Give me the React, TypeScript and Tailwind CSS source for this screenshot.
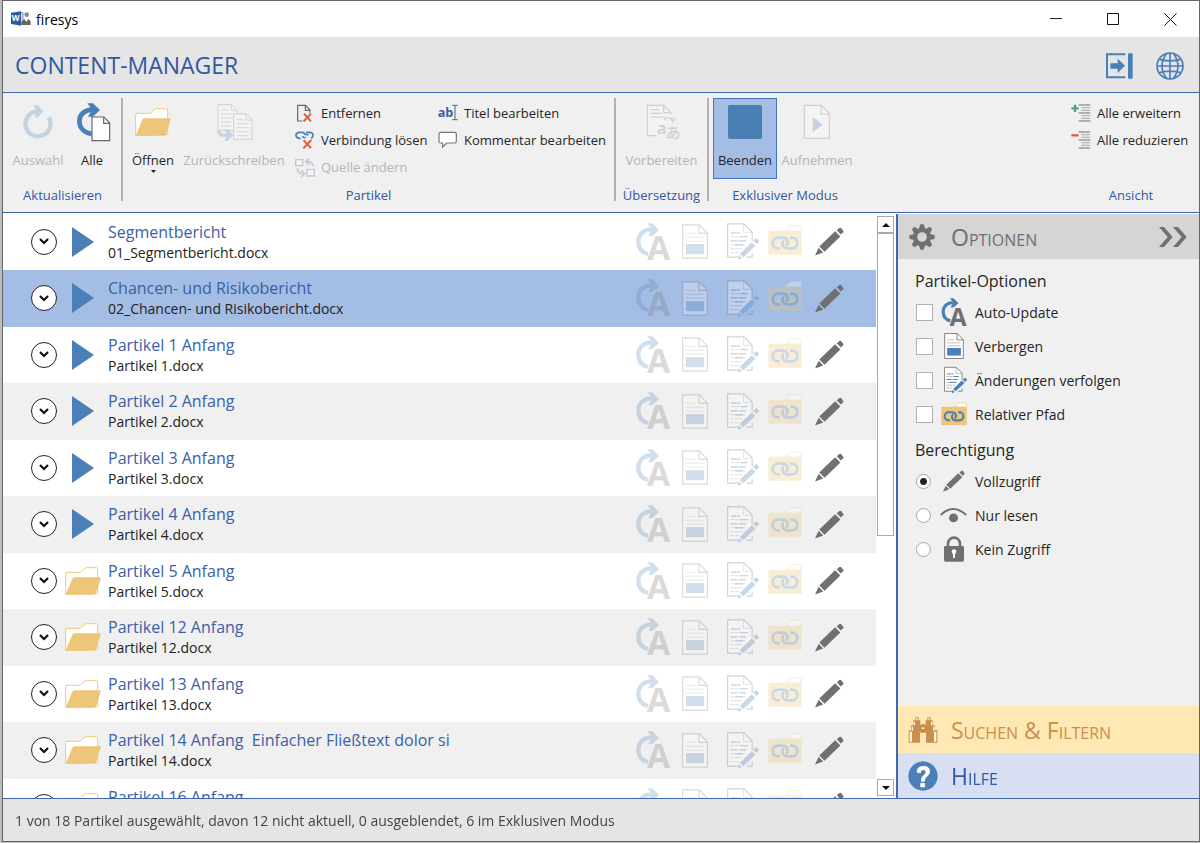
import { useState, type ReactNode } from "react";

type IconProps = { className?: string };

const BLUE = "#4a7fb8";
const GREY = "#707070";

function RefreshIcon({ className }: IconProps) {
  return (
    <svg className={className} width="30" height="34" viewBox="0 0 90 102" aria-hidden="true">
      <path d="M77 37A37.500 37.500 0 1 1 42 19" fill="none" stroke={BLUE} strokeWidth="13" />
      <path d="M30 1h15l16 18-16 18H33l6-12V13z" fill={BLUE} />
    </svg>
  );
}

function RefreshAllIcon({ className }: IconProps) {
  return (
    <svg className={className} width="34" height="39" viewBox="0 0 102 117" aria-hidden="true">
      <path d="M44 93C20 90 7 73 7 55C7 34 24 20 46 20" fill="none" stroke={BLUE} strokeWidth="14" />
      <path d="M31 1h17l21 20-21 20H33l8-14V14z" fill={BLUE} />
      <path d="M45 42h36l17 18v53H45z" fill="#fff" stroke="#666" strokeWidth="3.500" />
      <path d="M80 43v18h17" fill="none" stroke="#666" strokeWidth="3.500" />
    </svg>
  );
}

function FolderOpenIcon({ className }: IconProps) {
  return (
    <svg className={className} width="36" height="28" viewBox="0 0 108 84" aria-hidden="true">
      <path d="M2 82V20q0-4 4-4h40l14-13q2-1 4-1h30q4 0 4 4v74z" fill="#fff" stroke="#f3c778" strokeWidth="3" />
      <path d="M29 31h75q4 0 3 4L93 79q-2 4-6 4H2L22 35q2-4 7-4z" fill="#eec679" />
    </svg>
  );
}

function WriteBackIcon({ className }: IconProps) {
  return (
    <svg className={className} width="37" height="37" viewBox="0 0 111 111" aria-hidden="true">
      <path d="M6 2h41l16 17v60H6z" fill="#fff" stroke={GREY} strokeWidth="3" />
      <path d="M46 3v17h16M15 18h20M15 30h36M15 42h36M15 54h30M15 66h30" fill="none" stroke={GREY} strokeWidth="2.500" />
      <path d="M53 30h38l17 17v59H53z" fill="#fff" stroke={GREY} strokeWidth="3" />
      <path d="M90 31v17h17" fill="none" stroke={GREY} strokeWidth="3" />
      <path d="M62 47h20M62 59h36M62 71h36M62 83h36M62 95h36" stroke={BLUE} strokeWidth="2.500" />
      <path d="M6 80q4 15 26 15" fill="none" stroke={BLUE} strokeWidth="10" />
      <path d="M25 76h10l17 18-17 16H25l6-10V86z" fill={BLUE} />
    </svg>
  );
}

function Cross() {
  return <path d="M27 29l21 23M48 29L26 52" stroke="#dd5d41" strokeWidth="6" />;
}

function RemoveIcon() {
  return (
    <svg width="20" height="20" viewBox="0 0 60 60" aria-hidden="true">
      <path d="M22 51H8V4h24l13 14v8M31 5v14h13" fill="none" stroke="#666" strokeWidth="3.500" />
      <Cross />
    </svg>
  );
}

function UnlinkIcon() {
  return (
    <svg width="20" height="20" viewBox="0 0 60 60" aria-hidden="true">
      <path
        d="M17 22h-4q-10-1-10-9T12 4h9q8 0 9 8M22 16q4 5 10 4M33 4h10q11 0 11 9 0 7-6 9M40 12q-4-3-9-1"
        fill="none"
        stroke={BLUE}
        strokeWidth="5"
      />
      <path d="M26 28l22 23M49 27L25 52" stroke="#dd5d41" strokeWidth="6" />
    </svg>
  );
}

function SourceIcon() {
  return (
    <svg width="20" height="20" viewBox="0 0 60 60" aria-hidden="true">
      <path d="M2 5h21v18H2zM36 34h22v20H36z" fill="#fff" stroke={GREY} strokeWidth="4" />
      <path d="M54 25Q54 11 36 11M7 31q0 16 15 16" fill="none" stroke={BLUE} strokeWidth="5" />
      <path d="M43 1L32 11l11 10M18 37l11 10-11 10" fill="none" stroke={BLUE} strokeWidth="5" />
    </svg>
  );
}

function RenameIcon() {
  return (
    <svg width="20" height="20" viewBox="0 0 60 60" aria-hidden="true">
      <text x="-1" y="40" fontFamily="Open Sans, Noto Sans, sans-serif" fontSize="38" fontWeight="700" fill="#3660a6">
        ab
      </text>
      <path d="M43 4h6l2 2 2-2h6M43 47h6l2-2 2 2h6M51 6v39" fill="none" stroke="#777" strokeWidth="3.500" />
    </svg>
  );
}

function CommentIcon() {
  return (
    <svg width="20" height="20" viewBox="0 0 60 60" aria-hidden="true">
      <path
        d="M8 4h42q5 0 5 5v22q0 5-5 5H26L14 48V36H8q-5 0-5-5V9q0-5 5-5z"
        fill="#fff"
        stroke="#777"
        strokeWidth="3.500"
      />
    </svg>
  );
}

function TranslateIcon({ className }: IconProps) {
  return (
    <svg className={className} width="36" height="36" viewBox="0 0 108 108" aria-hidden="true">
      <path d="M30 95H4V4h50l20 22v7" fill="#fff" stroke={GREY} strokeWidth="3.500" />
      <path d="M53 5v21h20M14 17h24M14 28h32M14 39h46" fill="none" stroke={GREY} strokeWidth="3.500" />
      <text x="32" y="91" fontFamily="Open Sans, Noto Sans, sans-serif" fontSize="50" fontWeight="600" fill={GREY}>
        a
      </text>
      <text x="59" y="101" fontFamily="Noto Sans CJK JP, sans-serif" fontSize="45" fontWeight="500" fill={GREY}>
        あ
      </text>
      <path d="M54 49q4-9 15-8 9 1 12 11" fill="none" stroke={BLUE} strokeWidth="4" />
      <path d="M73 44l9 9 3-12" fill="none" stroke={BLUE} strokeWidth="4" />
    </svg>
  );
}

function RecordIcon({ className }: IconProps) {
  return (
    <svg className={className} width="28" height="36" viewBox="0 0 84 108" aria-hidden="true">
      <path d="M4 4h51l24 25v74H4z" fill="#fff" stroke={GREY} strokeWidth="3.500" />
      <path d="M54 5v25h24" fill="none" stroke={GREY} strokeWidth="3.500" />
      <path d="M29 38l30 24-30 23z" fill={BLUE} />
    </svg>
  );
}

function OutlineIcon({ kind }: { kind: "plus" | "minus" }) {
  return (
    <svg width="20" height="20" viewBox="0 0 60 60" aria-hidden="true">
      <path d="M23 3h35M23 27h35M23 51h35" stroke="#6f6f6f" strokeWidth="3.500" />
      <path d="M31 11h27M31 19h27M31 35h27M31 43h27" stroke="#b5b5b5" strokeWidth="3.500" />
      {kind === "plus" ? (
        <path d="M1 13h22M12 2v22" stroke="#4f9f81" strokeWidth="7" />
      ) : (
        <path d="M1 13h22" stroke="#dd5d41" strokeWidth="7" />
      )}
    </svg>
  );
}

function AutoUpdateIcon({ className }: IconProps) {
  return (
    <svg className={className} viewBox="0 0 102 114" aria-hidden="true">
      <path d="M36 93C17 88 7 74 7 56C7 34 24 19 45 19" fill="none" stroke={BLUE} strokeWidth="13" />
      <path d="M34 1h15l20 20-20 18H37l7-13V13z" fill={BLUE} />
      <text x="33" y="112" fontFamily="Open Sans, Noto Sans, sans-serif" fontSize="101" fontWeight="700" fill={GREY}>
        A
      </text>
    </svg>
  );
}

function HideIcon({ className }: IconProps) {
  return (
    <svg className={className} viewBox="0 0 80 106" aria-hidden="true">
      <path d="M2 2h51l25 25v77H2z" fill="#fff" stroke={GREY} strokeWidth="3.500" />
      <path d="M52 3v25h25" fill="none" stroke={GREY} strokeWidth="3.500" />
      <path d="M12 28h28M12 40h56M12 52h56" stroke="#aaa" strokeWidth="3" />
      <path d="M12 61h56v31H12z" fill={BLUE} />
    </svg>
  );
}

function TrackIcon({ className }: IconProps) {
  return (
    <svg className={className} viewBox="0 0 98 112" aria-hidden="true">
      <path d="M36 104H2V2h50l25 25v30L36 96z" fill="#fff" />
      <path d="M36 104H2V2h50l25 25v28M77 92v12H60" fill="none" stroke={GREY} strokeWidth="3.500" />
      <path d="M51 3v25h25M10 41h57M10 54h48M10 66h46M10 78h36M10 90h26" fill="none" stroke="#999" strokeWidth="3" strokeDasharray="12 2" />
      <path d="M12 30h18M32 30h8M42 41h20M12 54h18M38 54h20M24 66h26" stroke={BLUE} strokeWidth="4" />
      <path d="M80 54l8-7q2-2 4 0l5 6q2 2 0 4l-7 7zM76 58l11 11-37 35-11-10zM36 98l10 9-12 5z" fill={BLUE} />
    </svg>
  );
}

function PathFolderIcon({ className }: IconProps) {
  return (
    <svg className={className} viewBox="0 0 102 90" aria-hidden="true">
      <path d="M54 18L64 4q2-2 5-2h28q3 0 3 4v13z" fill="#fff" stroke="#f0cb84" strokeWidth="3" />
      <path d="M1 20q0-3 4-3h93q3 0 3 3v66q0 3-3 3H5q-4 0-4-3z" fill="#eec679" />
      <path
        d="M35 70H30a16 16 0 0 1 0-32h14Q58 39 59 52q0 6-5 10M67 38h5a16 16 0 0 1 0 32H58Q44 69 43 56q0-6 5-10"
        fill="none"
        stroke={BLUE}
        strokeWidth="8"
      />
    </svg>
  );
}

function PencilIcon({ className }: IconProps) {
  return (
    <svg className={className} viewBox="0 0 88 86" aria-hidden="true">
      <path d="M66 9l8-7q3-2 6 1l6 8q2 3-1 5l-7 6zM61 12l16 16-48 46-16-16zM11 62l14 14-23 9q-2 0-1-2z" fill={GREY} />
    </svg>
  );
}

function EyeIcon({ className }: IconProps) {
  return (
    <svg className={className} viewBox="0 0 84 50" aria-hidden="true">
      <path d="M2 25Q40-12 82 25" fill="none" stroke={GREY} strokeWidth="6" />
      <circle cx="42" cy="34" r="14" fill={GREY} />
    </svg>
  );
}

function LockIcon({ className }: IconProps) {
  return (
    <svg className={className} viewBox="0 0 60 78" aria-hidden="true">
      <path d="M12 34V23a18 18 0 0 1 36 0v11" fill="none" stroke={GREY} strokeWidth="8" />
      <path d="M4 30h52q4 0 4 4v38q0 5-5 5H5q-5 0-5-5V34q0-4 4-4z" fill={GREY} />
      <circle cx="30" cy="47" r="7" fill="#fff" />
      <path d="M27 48h6v18h-6z" fill="#fff" />
    </svg>
  );
}

function GearIcon() {
  return (
    <svg width="26" height="26" viewBox="-39 -39 78 78" aria-hidden="true">
      {[0, 45, 90, 135, 180, 225, 270, 315].map((angle) => (
        <path key={angle} d="M-9-25L-5-38H5L9-25z" fill={GREY} transform={`rotate(${angle})`} />
      ))}
      <circle r="21" fill="none" stroke={GREY} strokeWidth="13" />
    </svg>
  );
}

function BinocularsIcon() {
  return (
    <svg width="30" height="28" viewBox="0 0 90 84" aria-hidden="true">
      <path d="M22 4h10v9h5v14h3v-3h10v3h3V13h5V4h10v9h6v15h6v15h8v37H54V50H36v30H2V43h7V28h7V13h6z" fill="#c8904e" />
      <path d="M25 6h4v7h-4zM61 6h4v7h-4zM17 17h4v11h-4zM69 17h4v11h-4zM11 32h4v12h-4zM75 32h4v12h-4zM5 47h7v30H5zM78 47h7v30h-7z" fill="#fff4dc" />
      <path d="M41 34h8v5h-8z" fill="#ffe8b4" />
    </svg>
  );
}

function HelpIcon() {
  return (
    <svg width="30" height="30" viewBox="0 0 90 90" aria-hidden="true">
      <circle cx="45" cy="45" r="44" fill={BLUE} />
      <path d="M27 34q0-18 19-18t19 16q0 8-8 14-8 5-8 15h-9q0-13 8-19 6-4 6-9 0-7-8-7-9 0-9 10zM38 67h12v11H38z" fill="#fff" stroke="#fff" strokeWidth="2" />
    </svg>
  );
}

function DockIcon() {
  return (
    <svg width="28" height="28" viewBox="0 0 84 84" aria-hidden="true">
      <path d="M61 7H6v69h55" fill="none" stroke={BLUE} strokeWidth="6" />
      <rect x="69" y="4" width="14" height="76" rx="3" fill={BLUE} />
      <path d="M16 34h22V20l22 21-22 22V50H16z" fill={BLUE} />
    </svg>
  );
}

function GlobeIcon() {
  return (
    <svg width="28" height="28" viewBox="0 0 84 84" fill="none" stroke={BLUE} strokeWidth="5" aria-hidden="true">
      <circle cx="42" cy="42" r="39" />
      <path d="M42 3v78M3 42h78M10 22q32 9 64 0M10 62q32-9 64 0M32 4q-28 38 0 76M52 4q28 38 0 76" />
    </svg>
  );
}

function AppIcon() {
  return (
    <svg width="20" height="16" viewBox="0 0 60 48" aria-hidden="true">
      <path d="M24 5h12v34H24z" fill="#d9e2f0" stroke="#3560a8" strokeWidth="2" />
      <path d="M0 5l30-4v43L0 39z" fill="#2f5ba5" />
      <text x="2" y="31" fontFamily="Open Sans, Noto Sans, sans-serif" fontSize="24" fontWeight="700" fill="#fff">
        W
      </text>
      <circle cx="47" cy="11" r="7" fill="#8a8a8a" />
      <path d="M31 42V32l9-8 6 8 6-8 7 7v11z" fill="#666" />
    </svg>
  );
}

function BigButton({
  label,
  icon,
  width,
  disabled,
  active,
  arrow,
}: {
  label: string;
  icon: ReactNode;
  width: string;
  disabled?: boolean;
  active?: boolean;
  arrow?: boolean;
}) {
  return (
    <button
      type="button"
      disabled={disabled}
      aria-pressed={active}
      className={`flex h-full shrink-0 flex-col items-center border ${width} ${
        active ? "border-[#4472c4] bg-[#a4bde4]" : "border-transparent"
      } ${disabled ? "text-[#b4b4b4]" : "text-[#262626]"}`}
    >
      <span className={`flex h-[46px] w-full items-center justify-center ${disabled ? "opacity-25" : ""}`}>{icon}</span>
      <span className="mt-[5px] leading-5 whitespace-nowrap">{label}</span>
      {arrow && (
        <svg width="5" height="3" viewBox="0 0 5 3" aria-hidden="true">
          <path d="M0 0h5L2.500 3z" fill="#222" />
        </svg>
      )}
    </button>
  );
}

function SmallButton({ label, icon, disabled }: { label: string; icon: ReactNode; disabled?: boolean }) {
  return (
    <button
      type="button"
      disabled={disabled}
      className={`flex h-[27px] items-center gap-1.5 whitespace-nowrap ${disabled ? "text-[#b4b4b4]" : "text-[#262626]"}`}
    >
      <span className={disabled ? "opacity-30" : ""}>{icon}</span>
      <span>{label}</span>
    </button>
  );
}

function RibbonGroup({ title, className, children }: { title: string; className: string; children: ReactNode }) {
  return (
    <section aria-label={title} className={`flex shrink-0 flex-col ${className}`}>
      <div className="flex h-[81px]">{children}</div>
      <div className="flex h-[33px] items-center justify-center text-[#3358a0]">{title}</div>
    </section>
  );
}

function Divider() {
  return <div className="-mx-px h-[103px] w-0.5 shrink-0 bg-[#b0b0b0]" />;
}

type Particle = { title: string; file: string; exclusive: boolean };

const particles: Particle[] = [
  { title: "Segmentbericht", file: "01_Segmentbericht.docx", exclusive: true },
  { title: "Chancen- und Risikobericht", file: "02_Chancen- und Risikobericht.docx", exclusive: true },
  { title: "Partikel 1 Anfang", file: "Partikel 1.docx", exclusive: true },
  { title: "Partikel 2 Anfang", file: "Partikel 2.docx", exclusive: true },
  { title: "Partikel 3 Anfang", file: "Partikel 3.docx", exclusive: true },
  { title: "Partikel 4 Anfang", file: "Partikel 4.docx", exclusive: true },
  { title: "Partikel 5 Anfang", file: "Partikel 5.docx", exclusive: false },
  { title: "Partikel 12 Anfang", file: "Partikel 12.docx", exclusive: false },
  { title: "Partikel 13 Anfang", file: "Partikel 13.docx", exclusive: false },
  { title: "Partikel 14 Anfang  Einfacher Fließtext dolor si", file: "Partikel 14.docx", exclusive: false },
  { title: "Partikel 16 Anfang", file: "Partikel 16.docx", exclusive: false },
];

function ParticleRow({ item, selected, onSelect }: { item: Particle; selected: boolean; onSelect: () => void }) {
  return (
    <li
      onClick={onSelect}
      className={`flex items-center pr-8 pb-px pl-7 odd:h-14 even:h-[57px] ${
        selected ? "bg-[#a4bde4]" : "odd:bg-white even:bg-[#f0f0f0]"
      }`}
    >
      <button type="button" aria-label="Details" className="flex size-[26px] items-center justify-center rounded-full border border-[#222] bg-white">
        <svg width="10" height="7" viewBox="0 0 10 7" aria-hidden="true">
          <path d="M1 1l4 4 4-4" fill="none" stroke="#111" strokeWidth="2.200" />
        </svg>
      </button>
      <span className="ml-2 flex w-9 justify-center">
        {item.exclusive ? (
          <svg width="22" height="30" viewBox="0 0 22 30" aria-hidden="true">
            <path d="M0 0l22 15-22 15z" fill={BLUE} />
          </svg>
        ) : (
          <FolderOpenIcon />
        )}
      </span>
      <span className="ml-[7px] min-w-0 flex-1">
        <span className="block truncate text-[16px] leading-[22px] whitespace-pre text-[#3a60a8]">{item.title}</span>
        <span className="block truncate leading-5 text-[#222]">{item.file}</span>
      </span>
      <AutoUpdateIcon className="h-[38px] w-[34px] opacity-25" />
      <HideIcon className="ml-3 h-[35px] w-[26px] opacity-25" />
      <TrackIcon className="ml-[19px] h-[37px] w-8 opacity-30" />
      <PathFolderIcon className="mb-1 ml-[9px] h-[30px] w-[34px] opacity-30" />
      <PencilIcon className="ml-[13px] h-[29px] w-[29px]" />
    </li>
  );
}

const options = [
  { label: "Auto-Update", icon: <AutoUpdateIcon className="h-7 w-[26px]" /> },
  { label: "Verbergen", icon: <HideIcon className="h-[26px] w-[22px]" /> },
  { label: "Änderungen verfolgen", icon: <TrackIcon className="ml-1 h-7 w-[26px]" /> },
  { label: "Relativer Pfad", icon: <PathFolderIcon className="h-6 w-[26px]" /> },
];

const rights = [
  { label: "Vollzugriff", icon: <PencilIcon className="h-[22px] w-[22px]" /> },
  { label: "Nur lesen", icon: <EyeIcon className="h-4 w-[27px]" /> },
  { label: "Kein Zugriff", icon: <LockIcon className="h-[26px] w-5" /> },
];

export default function App() {
  const [selected, setSelected] = useState(1);
  const [right, setRight] = useState("Vollzugriff");

  return (
    <div className="flex h-screen flex-col bg-[#bdbdbd] pb-px pl-0.5 font-['Open_Sans','Noto_Sans',sans-serif] text-[14px] text-[#262626]">
      <div className="flex min-h-0 flex-1 flex-col border border-[#666]">
        <div className="flex h-9 shrink-0 items-center bg-white pl-2">
          <AppIcon />
          <span className="ml-[5px] text-black">firesys</span>
          <div className="ml-auto flex pr-[22px] text-black">
            <button type="button" aria-label="Minimieren" className="flex w-[57px] justify-end">
              <svg width="13" height="13" viewBox="0 0 13 13" aria-hidden="true">
                <path d="M0 5.500h12" stroke="#222" />
              </svg>
            </button>
            <button type="button" aria-label="Maximieren" className="flex w-[57px] justify-end">
              <svg width="13" height="13" viewBox="0 0 13 13" aria-hidden="true">
                <path d="M.5.500h11v11H.5z" fill="none" stroke="#111" />
              </svg>
            </button>
            <button type="button" aria-label="Schließen" className="flex w-[57px] justify-end">
              <svg width="13" height="13" viewBox="0 0 13 13" aria-hidden="true">
                <path d="M.5.500l12 12M12.500.500l-12 12" stroke="#111" />
              </svg>
            </button>
          </div>
        </div>

        <header className="flex h-14 shrink-0 items-center border-b border-[#3f68ad] bg-[#e5e5e5] pr-[15px] pl-3">
          <h1 className="text-[23px] leading-7 text-[#3058a0]">CONTENT-MANAGER</h1>
          <div className="ml-auto flex gap-[23px] pt-0.5">
            <button type="button" aria-label="Andocken">
              <DockIcon />
            </button>
            <button type="button" aria-label="Sprache">
              <GlobeIcon />
            </button>
          </div>
        </header>

        <div className="flex h-[120px] shrink-0 border-b border-[#3f68ad] bg-[#f0f0f0] pt-[5px] text-[13px]">
          <RibbonGroup title="Aktualisieren" className="w-[119px]">
            <div className="flex pl-2">
              <BigButton label="Auswahl" icon={<RefreshIcon />} width="w-[54px]" disabled />
              <BigButton label="Alle" icon={<RefreshAllIcon className="ml-1" />} width="w-[54px]" />
            </div>
          </RibbonGroup>
          <Divider />
          <RibbonGroup title="Partikel" className="w-[493px]">
            <div className="flex pl-1">
              <BigButton label="Öffnen" icon={<FolderOpenIcon />} width="w-[54px]" arrow />
              <BigButton label="Zurückschreiben" icon={<WriteBackIcon />} width="w-[108px]" disabled />
              <div className="ml-[7px] grid auto-rows-[27px] grid-cols-[143px_auto] pt-0.5">
                <SmallButton label="Entfernen" icon={<RemoveIcon />} />
                <SmallButton label="Titel bearbeiten" icon={<RenameIcon />} />
                <SmallButton label="Verbindung lösen" icon={<UnlinkIcon />} />
                <SmallButton label="Kommentar bearbeiten" icon={<CommentIcon />} />
                <SmallButton label="Quelle ändern" icon={<SourceIcon />} disabled />
              </div>
            </div>
          </RibbonGroup>
          <Divider />
          <RibbonGroup title="Übersetzung" className="w-[93px]">
            <div className="flex flex-1 justify-center">
              <BigButton label="Vorbereiten" icon={<TranslateIcon className="ml-1" />} width="w-20" disabled />
            </div>
          </RibbonGroup>
          <Divider />
          <RibbonGroup title="Exklusiver Modus" className="w-[154px]">
            <div className="flex pl-[5px]">
              <BigButton
                label="Beenden"
                icon={<span className="size-[34px] rounded-xs bg-[#4a7fb3]" />}
                width="w-16"
                active
              />
              <BigButton label="Aufnehmen" icon={<RecordIcon />} width="w-20" disabled />
            </div>
          </RibbonGroup>
          <RibbonGroup title="Ansicht" className="ml-auto w-[136px]">
            <div className="flex flex-col pt-0.5 pl-2">
              <SmallButton label="Alle erweitern" icon={<OutlineIcon kind="plus" />} />
              <SmallButton label="Alle reduzieren" icon={<OutlineIcon kind="minus" />} />
            </div>
          </RibbonGroup>
        </div>

        <div className="flex min-h-0 flex-1 bg-white pt-px">
          <ul className="min-w-0 flex-1 overflow-y-auto [scrollbar-width:none]">
            {particles.map((item, index) => (
              <ParticleRow key={item.title} item={item} selected={index === selected} onSelect={() => setSelected(index)} />
            ))}
          </ul>
          <div className="flex w-[18px] shrink-0 flex-col py-0.5 pl-px">
            <button type="button" aria-label="Nach oben" className="flex h-[17px] items-center justify-center border border-[#aaa]">
              <svg width="8" height="4" viewBox="0 0 8 4" aria-hidden="true">
                <path d="M0 4h8L4 0z" fill="#111" />
              </svg>
            </button>
            <div className="flex-1">
              <div className="h-[55.500%] border border-[#aaa] bg-white" />
            </div>
            <button type="button" aria-label="Nach unten" className="flex h-[17px] items-center justify-center border border-[#aaa]">
              <svg width="8" height="4" viewBox="0 0 8 4" aria-hidden="true">
                <path d="M0 0h8L4 4z" fill="#111" />
              </svg>
            </button>
          </div>

          <aside className="ml-0.5 flex w-[303px] shrink-0 flex-col border-l-2 border-[#3f68ad] bg-[#f0f0f0]">
            <button type="button" className="flex h-[45px] shrink-0 items-center bg-[#d5d5d5] pr-3 pl-[11px] text-[#6f6f6f]">
              <GearIcon />
              <span className="ml-4 text-[23px] leading-7 [font-variant-caps:small-caps]">Optionen</span>
              <svg className="ml-auto" width="28" height="20" viewBox="0 0 84 60" aria-hidden="true">
                <path d="M0 0h15l26 30-26 30H0l26-30zM42 0h15l26 30-26 30H42l26-30z" fill="#707070" />
              </svg>
            </button>

            <fieldset className="pl-[17px]">
              <legend className="pt-[9px] text-[16px] leading-[27px]">Partikel-Optionen</legend>
              {options.map((option) => (
                <label key={option.label} className="flex h-[34px] items-center">
                  <input type="checkbox" className="mr-[7px] ml-px size-[17px] appearance-none border border-[#b0b0b0] bg-white checked:bg-[#4a7fb8]" />
                  <span className="mr-2 flex w-[27px] items-center justify-center">{option.icon}</span>
                  {option.label}
                </label>
              ))}
            </fieldset>

            <fieldset className="pl-[17px]">
              <legend className="pt-1.5 text-[16px] leading-[27px]">Berechtigung</legend>
              {rights.map((option) => (
                <label key={option.label} className="flex h-[34px] items-center">
                  <input
                    type="radio"
                    name="right"
                    checked={right === option.label}
                    onChange={() => setRight(option.label)}
                    className="mr-[9px] ml-px size-[15px] appearance-none rounded-full border border-[#a5a5a5] bg-white checked:bg-[radial-gradient(circle,#222_3px,#fff_4px)]"
                  />
                  <span className="mr-2 flex w-[27px] items-center justify-center">{option.icon}</span>
                  {option.label}
                </label>
              ))}
            </fieldset>

            <button type="button" className="mt-auto flex h-[47px] shrink-0 items-center bg-[#ffe8b4] pl-2.5 text-[#c8904e]">
              <BinocularsIcon />
              <span className="ml-[13px] text-[23px] leading-7 [font-variant-caps:small-caps]">Suchen &amp; Filtern</span>
            </button>
            <button type="button" className="flex h-[45px] shrink-0 items-center bg-[#d9dff2] pl-2.5 text-[#3058a0]">
              <HelpIcon />
              <span className="ml-[13px] text-[23px] leading-7 [font-variant-caps:small-caps]">Hilfe</span>
            </button>
          </aside>
        </div>

        <footer className="flex h-[43px] shrink-0 items-center border-t border-[#3f68ad] bg-[#e5e5e5] pl-3 text-[#444]">
          1 von 18 Partikel ausgewählt, davon 12 nicht aktuell, 0 ausgeblendet, 6 im Exklusiven Modus
        </footer>
      </div>
    </div>
  );
}
